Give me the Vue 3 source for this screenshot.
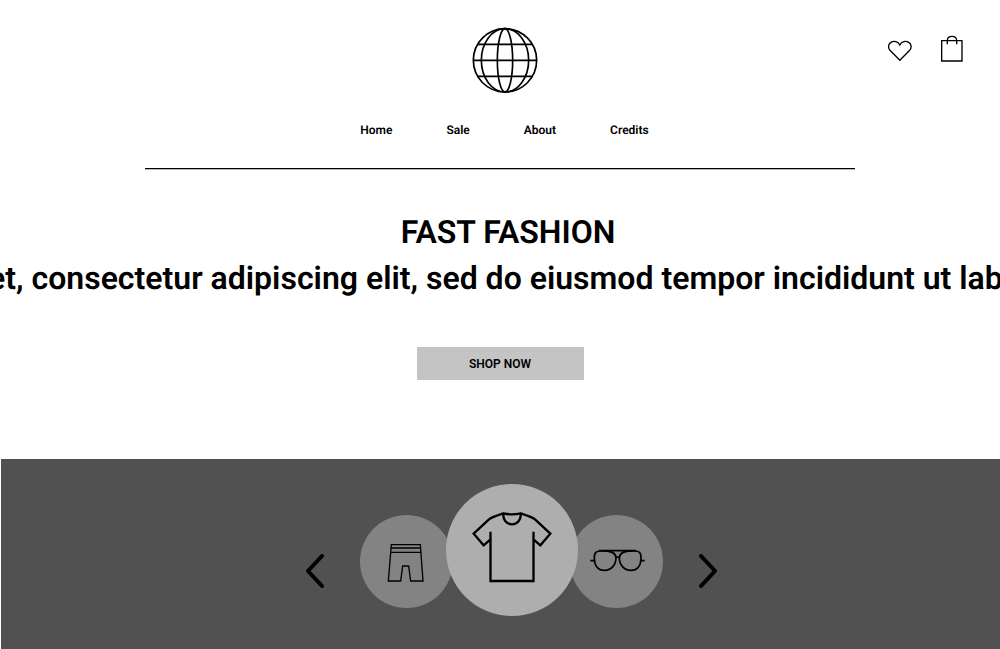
<script setup>
const links = ['Home', 'Sale', 'About', 'Credits']
</script>

<template>
  <div class="page">
    <header class="header">
      <div class="bar">
        <a class="logo" href="#" aria-label="Fast Fashion">
          <svg width="66" height="66" viewBox="35 21 198 198" fill="none" stroke="#000" stroke-width="5">
            <circle cx="134" cy="121" r="95" />
            <ellipse cx="134" cy="121" rx="71" ry="95" />
            <ellipse cx="134" cy="121" rx="23" ry="95" />
            <path d="M39 121H229M52 73H216M52 169H216" />
          </svg>
        </a>
        <div class="actions">
          <button type="button" aria-label="Wishlist">
            <svg width="24" height="24" viewBox="54 60 72 72" fill="none" stroke="#000" stroke-width="4">
              <path d="M89.500 121L60 91C53 83 55 71 63 67C72 61 84 65 89.500 75C95 65 107 61 116 67C124 71 126 83 119 91Z" />
            </svg>
          </button>
          <button type="button" aria-label="Shopping bag">
            <svg width="22" height="28" viewBox="213 45 66 84" fill="none" stroke="#000" stroke-width="4">
              <path d="M215 62H276V123H215ZM232 73V62C232 45 260 45 260 62V73" />
            </svg>
          </button>
        </div>
      </div>
      <nav class="nav">
        <a v-for="link in links" :key="link" href="#">{{ link }}</a>
      </nav>
    </header>
    <hr class="rule" />

    <main>
      <section class="hero">
        <div class="copy">
          <h1>FAST FASHION</h1>
          <p>Lorem ipsum dolor sit amet, consectetur adipiscing elit, sed do eiusmod tempor incididunt ut labore et dolore magna aliqua.</p>
        </div>
        <button class="shop" type="button">SHOP NOW</button>
      </section>

      <section class="carousel" aria-label="Categories">
        <button class="arrow" type="button" aria-label="Previous">
          <svg width="18" height="34" viewBox="0 0 18 34"><path d="M16 2L2 17L16 32" /></svg>
        </button>
        <button class="item left" type="button" aria-label="Shorts">
          <svg viewBox="30 120 279 279" stroke-width="4">
            <path d="M124 209H211L219 318H182L176 273H158L152 318H115ZM123 219H212M122 232H213" />
          </svg>
        </button>
        <button class="item featured" type="button" aria-label="T-shirts">
          <svg viewBox="18 27 396 396" stroke-width="7">
            <path d="M151.500 170V318H280.500V170M151.500 193L131 211L101 176L147 133Q153 127 190 115Q216 121 242 115Q279 127 285 133L331 176L301 211L280.500 193M190 115C188 135 200 148 216 148S244 135 242 115" />
          </svg>
        </button>
        <button class="item right" type="button" aria-label="Sunglasses">
          <svg viewBox="0 45 279 279" stroke-width="5">
            <path d="M61 182H73M211 182H224M87 152H198M137 173Q143 169 149 173" />
            <path d="M73 176C72 158 78 153 92 153C119 153 138 160 138 173C138 194 124 211 104 211C85 211 74 198 73 176Z" />
            <path d="M213 176C214 158 208 153 194 153C167 153 148 160 148 173C148 194 162 211 182 211C201 211 212 198 213 176Z" />
            <path d="M120 153Q136 158 138 173M166 153Q150 158 148 173" />
          </svg>
        </button>
        <button class="arrow" type="button" aria-label="Next">
          <svg width="18" height="34" viewBox="0 0 18 34"><path d="M2 2L16 17L2 32" /></svg>
        </button>
      </section>
    </main>
  </div>
</template>

<style>
body {
  margin: 0;
  background: #fff;
}
</style>

<style scoped>
.page {
  min-height: 100vh;
  display: flex;
  flex-direction: column;
  overflow: hidden;
  color: #000;
  font-family: Roboto, sans-serif;
  font-weight: 600;
  text-rendering: geometricPrecision;
}
button {
  padding: 0;
  border: 0;
  background: none;
  color: inherit;
  font: inherit;
  cursor: pointer;
}
svg {
  display: block;
}
.header {
  padding: 27px 0 0 9px;
}
.bar {
  display: grid;
  grid-template-columns: 1fr auto 1fr;
}
.logo {
  grid-column: 2;
}
.actions {
  display: flex;
  align-items: flex-start;
  justify-content: flex-end;
  gap: 29px;
  padding: 8px 37px 0 0;
}
.actions button:first-child {
  padding-top: 5px;
}
.nav {
  display: flex;
  justify-content: center;
  gap: 54px;
  margin-top: 29px;
  font-size: 12px;
  line-height: 16px;
}
.nav a {
  color: inherit;
  text-decoration: none;
}
.rule {
  width: 71%;
  height: 1px;
  margin: 30px auto 0;
  border: 0;
  border-bottom: 1px solid #bbb;
  background: #000;
  flex: none;
}
main {
  flex: 1;
  display: flex;
  flex-direction: column;
}
.hero {
  display: flex;
  flex-direction: column;
  align-items: center;
  padding: 39px 0 79px;
}
.copy {
  display: flex;
  flex-direction: column;
  align-items: center;
  padding-left: 16px;
  font-size: 32px;
  line-height: 46px;
  white-space: nowrap;
}
h1,
p {
  margin: 0;
  font: inherit;
}
.shop {
  width: 167px;
  height: 33px;
  margin-top: 46px;
  background: #c4c4c4;
  font-size: 12px;
}
.carousel {
  flex: 1;
  display: flex;
  justify-content: center;
  align-items: flex-end;
  margin-left: 1px;
  padding: 24px 0 33px 22px;
  background: #515151;
}
.item {
  width: 93px;
  height: 93px;
  margin-bottom: 8px;
  border-radius: 50%;
  background: #838383;
}
.item svg {
  width: 100%;
  height: 100%;
  fill: none;
  stroke: #000;
}
.left {
  margin-left: 36px;
  margin-right: -7px;
}
.right {
  margin-left: -8px;
  margin-right: 36px;
}
.featured {
  position: relative;
  width: 132px;
  height: 132px;
  margin-bottom: 0;
  background: #aeaeae;
}
.arrow {
  margin-bottom: 28px;
}
.arrow path {
  fill: none;
  stroke: #000;
  stroke-width: 4;
  stroke-linecap: round;
}
</style>
